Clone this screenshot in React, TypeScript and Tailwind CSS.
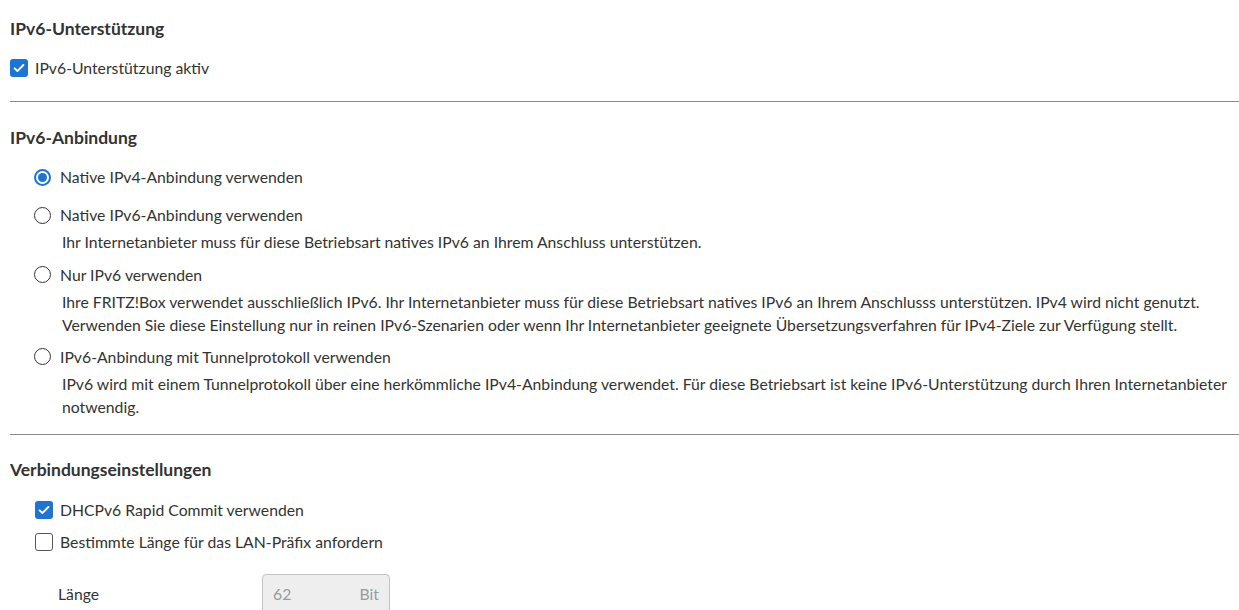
import React from "react";

const Check: React.FC<{ checked: boolean }> = ({ checked }) =>
  checked ? (
    <span className="flex h-[18px] w-[18px] shrink-0 items-center justify-center rounded-[3px] bg-[#1e74d2]">
      <svg viewBox="0 0 16 16" className="h-[14px] w-[14px]" fill="none">
        <path d="M3 8.4l3.2 3.1L13 4.6" stroke="#fff" strokeWidth={2.2} strokeLinecap="round" strokeLinejoin="round" />
      </svg>
    </span>
  ) : (
    <span className="h-[18px] w-[18px] shrink-0 rounded-[3px] border-[1.5px] border-[#555] bg-white" />
  );

const Radio: React.FC<{ checked: boolean }> = ({ checked }) =>
  checked ? (
    <span className="flex h-[17px] w-[17px] shrink-0 items-center justify-center rounded-full border-2 border-[#1e74d2] bg-white">
      <span className="h-[9px] w-[9px] rounded-full bg-[#1e74d2]" />
    </span>
  ) : (
    <span className="h-[17px] w-[17px] shrink-0 rounded-full border-[1.5px] border-[#333] bg-white" />
  );

const options = [
  { label: "Native IPv4-Anbindung verwenden", checked: true, desc: "", gap: "" },
  {
    label: "Native IPv6-Anbindung verwenden",
    checked: false,
    desc: "Ihr Internetanbieter muss für diese Betriebsart natives IPv6 an Ihrem Anschluss unterstützen.",
    gap: "mt-[14px]",
  },
  {
    label: "Nur IPv6 verwenden",
    checked: false,
    desc: "Ihre FRITZ!Box verwendet ausschließlich IPv6. Ihr Internetanbieter muss für diese Betriebsart natives IPv6 an Ihrem Anschlusss unterstützen. IPv4 wird nicht genutzt. Verwenden Sie diese Einstellung nur in reinen IPv6-Szenarien oder wenn Ihr Internetanbieter geeignete Übersetzungsverfahren für IPv4-Ziele zur Verfügung stellt.",
    gap: "mt-[9px]",
  },
  {
    label: "IPv6-Anbindung mit Tunnelprotokoll verwenden",
    checked: false,
    desc: "IPv6 wird mit einem Tunnelprotokoll über eine herkömmliche IPv4-Anbindung verwendet. Für diese Betriebsart ist keine IPv6-Unterstützung durch Ihren Internetanbieter notwendig.",
    gap: "mt-[8px]",
  },
];

export default function App() {
  return (
    <div className="min-h-[610px] bg-white pl-[10px] font-['Lato','Liberation_Sans',sans-serif] text-[15.75px] leading-[24px] text-[#333]">
      <h2 className="pt-[17px] text-[17.5px] font-bold leading-[24px]">IPv6-Unterstützung</h2>
      <label className="mt-[15px] flex h-[24px] items-center gap-[7px]">
        <Check checked />
        <span>IPv6-Unterstützung aktiv</span>
      </label>
      <div className="mt-[21px] border-t border-[#8a8a8a]" />

      <h2 className="mt-[24px] text-[17.5px] font-bold leading-[24px]">IPv6-Anbindung</h2>
      <div className="mt-[15px] flex flex-col pl-[24px]">
        {options.map((o) => (
          <div key={o.label} className={o.gap}>
            <label className="flex h-[24px] items-center gap-[9px]">
              <Radio checked={o.checked} />
              <span>{o.label}</span>
            </label>
            {o.desc && <p className="mt-[3px] pl-[28px] pr-[10px] leading-[23.5px]">{o.desc}</p>}
          </div>
        ))}
      </div>
      <div className="mt-[15px] border-t border-[#8a8a8a]" />

      <h2 className="mt-[23px] text-[17.5px] font-bold leading-[24px]">Verbindungseinstellungen</h2>
      <div className="mt-[16px] flex flex-col gap-[8px] pl-[25px]">
        <label className="flex h-[24px] items-center gap-[7px]">
          <Check checked />
          <span>DHCPv6 Rapid Commit verwenden</span>
        </label>
        <label className="flex h-[24px] items-center gap-[7px]">
          <Check checked={false} />
          <span>Bestimmte Länge für das LAN-Präfix anfordern</span>
        </label>
      </div>
      <div className="mt-[20px] flex items-center pl-[48px]">
        <span className="w-[204px]">Länge</span>
        <div className="flex h-[40px] w-[128px] items-center justify-between rounded-[4px] border border-[#c4c4c4] bg-[#eeeeee] px-[10px] text-[#9a9a9a]">
          <span>62</span>
          <span>Bit</span>
        </div>
      </div>
    </div>
  );
}
